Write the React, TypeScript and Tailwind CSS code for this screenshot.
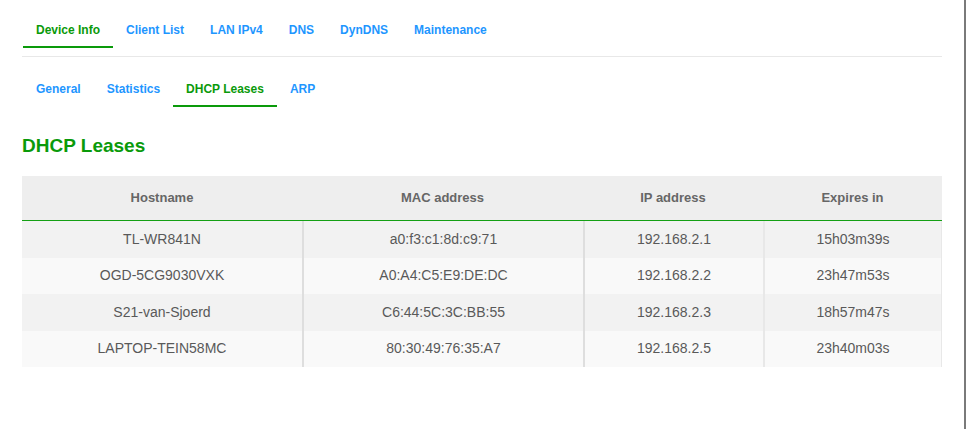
import React from 'react';

const mainTabs = ['Device Info', 'Client List', 'LAN IPv4', 'DNS', 'DynDNS', 'Maintenance'];
const subTabs = ['General', 'Statistics', 'DHCP Leases', 'ARP'];

const leases = [
    { host: 'TL-WR841N', mac: 'a0:f3:c1:8d:c9:71', ip: '192.168.2.1', expires: '15h03m39s' },
    { host: 'OGD-5CG9030VXK', mac: 'A0:A4:C5:E9:DE:DC', ip: '192.168.2.2', expires: '23h47m53s' },
    { host: 'S21-van-Sjoerd', mac: 'C6:44:5C:3C:BB:55', ip: '192.168.2.3', expires: '18h57m47s' },
    { host: 'LAPTOP-TEIN58MC', mac: '80:30:49:76:35:A7', ip: '192.168.2.5', expires: '23h40m03s' },
];

const Tabs = ({ items, active }: { items: string[]; active: string }) => (
    <div className="flex">
        {items.map((t) => (
            <div
                key={t}
                className={
                    t === active
                        ? 'px-[13px] pt-2 pb-2 leading-4 text-[12px] font-bold text-[#0a9a0a] border-b-2 border-[#0a9a0a]'
                        : 'px-[13px] pt-2 pb-2 leading-4 text-[12px] font-bold text-[#1e96ff] border-b-2 border-transparent'
                }
            >
                {t}
            </div>
        ))}
    </div>
);

const App = () => {
    return (
        <div className="flex h-screen w-[967px] bg-white font-['Liberation_Sans',Arial,sans-serif]">
            <div className="flex-1 pl-[22px] pr-[22px] pt-[14px]">
                {/* Main tabs */}
                <div className="ml-px">
                    <Tabs items={mainTabs} active="Device Info" />
                </div>
                <div className="mt-2 h-px bg-[#e8e8e8]" />

                {/* Sub tabs */}
                <div className="mt-4 ml-px">
                    <Tabs items={subTabs} active="DHCP Leases" />
                </div>

                <h3 className="mt-[27px] text-[19px] leading-[23px] font-bold text-[#0a9a0a]">DHCP Leases</h3>

                {/* Leases table */}
                <table className="mt-[19px] w-[920px] table-fixed border-separate border-spacing-0">
                    <colgroup>
                        <col className="w-[280px]" />
                        <col className="w-[281px]" />
                        <col className="w-[180px]" />
                        <col />
                    </colgroup>
                    <thead>
                        <tr className="bg-[#eeeeee]">
                            <th className="h-[45px] border-b border-[#14a014] text-[13px] font-bold text-[#666]">Hostname</th>
                            <th className="h-[45px] border-b border-[#14a014] text-[13px] font-bold text-[#666]">MAC address</th>
                            <th className="h-[45px] border-b border-[#14a014] text-[13px] font-bold text-[#666]">IP address</th>
                            <th className="h-[45px] border-b border-[#14a014] text-[13px] font-bold text-[#666]">Expires in</th>
                        </tr>
                    </thead>
                    <tbody>
                        {leases.map((l, i) => (
                            <tr key={l.mac} className={i % 2 === 0 ? 'bg-[#f2f2f2]' : 'bg-[#f9f9f9]'}>
                                <td className="h-[36.5px] p-0 text-center text-[14px] text-[#595959]">{l.host}</td>
                                <td className="h-[36.5px] p-0 text-center text-[14px] text-[#595959] border-l-2 border-[#dedede]">{l.mac}</td>
                                <td className="h-[36.5px] p-0 text-center text-[14px] text-[#595959] border-l-2 border-[#dedede]">{l.ip}</td>
                                <td className="h-[36.5px] p-0 text-center text-[14px] text-[#595959] border-l-2 border-r border-[#e8e8e8]">{l.expires}</td>
                            </tr>
                        ))}
                    </tbody>
                </table>
            </div>
            <div className="w-[2px] bg-[#7a7a7a]" />
            <div className="w-px" />
        </div>
    );
};

export default App;
